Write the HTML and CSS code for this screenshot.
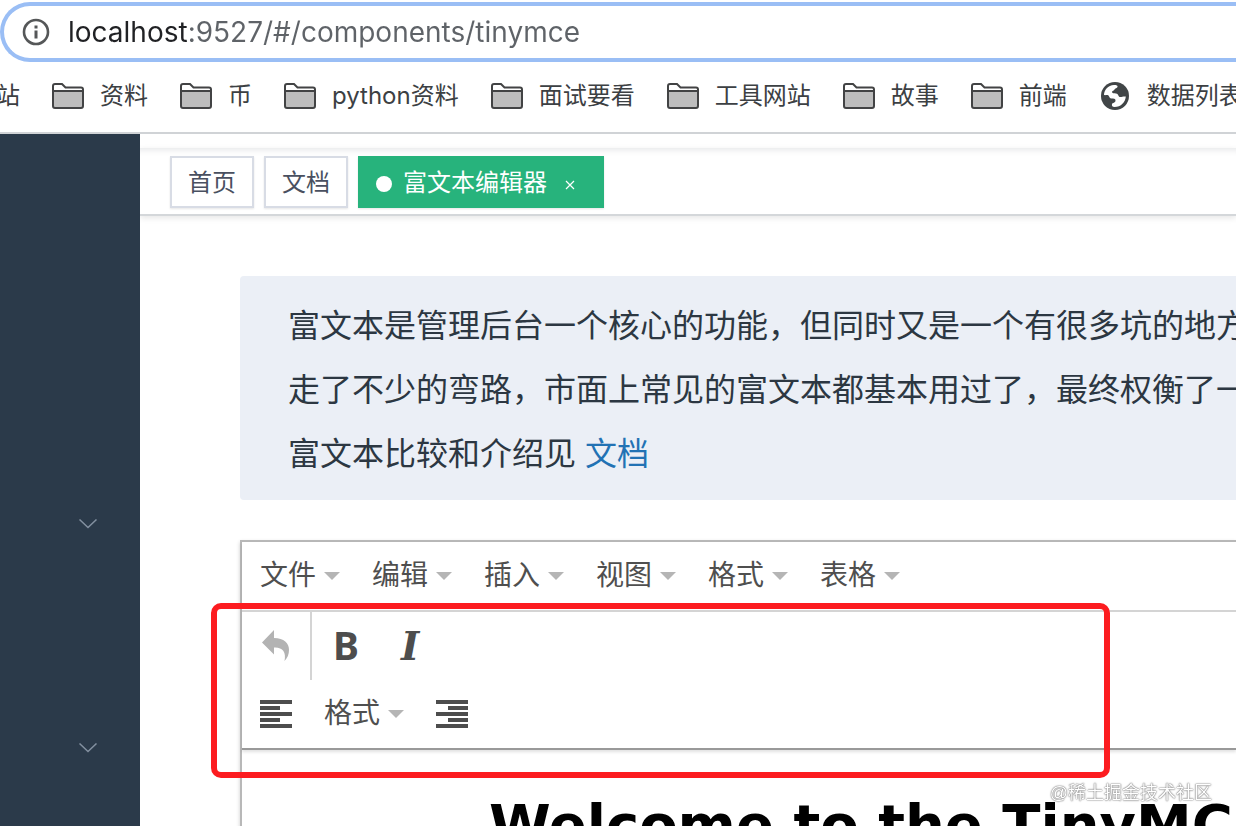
FILE: index.html
```html
<!DOCTYPE html>
<html lang="zh-CN">
<head>
  <meta charset="UTF-8" />
  <meta name="viewport" content="width=device-width, initial-scale=1.0"/>
  <title>富文本编辑器</title>
  <link rel="stylesheet" href="styles.css">
</head>
<body>
  <svg class="sprite" aria-hidden="true">
    <symbol id="folder" viewBox="0 0 32 26">
      <path d="M1 23V3Q1 1 3 1H10L13.5 4.500H29Q31 4.500 31 6.500V23Q31 25 29 25H3Q1 25 1 23Z" fill="#fff"/>
      <path d="M1 8H31V23Q31 25 29 25H3Q1 25 1 23Z" fill="#bdbdbd"/>
      <path d="M1 8H31M1 23V3Q1 1 3 1H10L13.500 4.500H29Q31 4.500 31 6.500V23Q31 25 29 25H3Q1 25 1 23Z" fill="none" stroke="#424344" stroke-width="2"/>
    </symbol>
    <symbol id="chevron" viewBox="0 0 18 10">
      <path d="M0.500 0.500L9 8.500L17.500 0.500" fill="none" stroke="#8390a0" stroke-width="1.500"/>
    </symbol>
  </svg>

  <!-- Address bar -->
  <header class="browser">
    <div class="address">
      <svg class="info" viewBox="0 0 28 28" aria-hidden="true">
        <circle cx="14" cy="14" r="12" fill="none" stroke="#555758" stroke-width="2.600"/>
        <path d="M12.500 7.500h3v3h-3zM12.500 12.500h3v8h-3z" fill="#555758"/>
      </svg>
      <input class="url" type="text" aria-label="URL" value="localhost:9527/#/components/tinymce" spellcheck="false">
    </div>
    <nav class="bookmarks">
      <a href="#">站</a>
      <a href="#"><svg class="folder"><use href="#folder"/></svg>资料</a>
      <a href="#"><svg class="folder"><use href="#folder"/></svg>币</a>
      <a href="#"><svg class="folder"><use href="#folder"/></svg>python资料</a>
      <a href="#"><svg class="folder"><use href="#folder"/></svg>面试要看</a>
      <a href="#"><svg class="folder"><use href="#folder"/></svg>工具网站</a>
      <a href="#"><svg class="folder"><use href="#folder"/></svg>故事</a>
      <a href="#"><svg class="folder"><use href="#folder"/></svg>前端</a>
      <a href="#">
        <svg class="globe" viewBox="0 0 28 28">
          <circle cx="14" cy="14" r="14" fill="#414547"/>
          <path d="M3 13C3 8 7 3.500 13 3C15.500 3 17 3.500 16.500 5C16 6.500 14 6 13.500 7.500C13.200 9 11 8.500 11 10C11 11.500 13 11 15 11.500C17.500 12 17 14 18.500 15C20.500 15.500 22 14 24.800 14.500C24.500 20 20 25 13.500 25C11.500 25 10.500 24 11 22C11.500 20.500 14.500 21 14.500 18.500C14.500 16.500 12.500 16.500 10.500 16.500C8.500 16.500 8.500 14.500 7.500 13.500C6 12.500 4.500 13.500 3 13Z" fill="#fff"/>
        </svg>数据列表
      </a>
    </nav>
  </header>

  <div class="app">
    <!-- Sidebar -->
    <aside class="sidebar">
      <button class="submenu" aria-label="展开"><svg class="chevron"><use href="#chevron"/></svg></button>
      <button class="submenu" aria-label="展开"><svg class="chevron"><use href="#chevron"/></svg></button>
    </aside>

    <main class="main">
      <div class="navbar"></div>
      <div class="tags">
        <a class="tag" href="#">首页</a>
        <a class="tag" href="#">文档</a>
        <a class="tag active" href="#">
          富文本编辑器
          <svg class="close" viewBox="0 0 10 10"><path d="M1 1L9 9M9 1L1 9" stroke="#fff" stroke-width="1.200"/></svg>
        </a>
      </div>

      <div class="content">
        <aside class="note">
          富文本是管理后台一个核心的功能，但同时又是一个有很多坑的地方<br>
          走了不少的弯路，市面上常见的富文本都基本用过了，最终权衡了一<br>
          富文本比较和介绍见 <a href="#">文档</a>
        </aside>

        <!-- Editor -->
        <section class="editor">
          <div class="panel">
            <div class="menubar">
              <button class="menu">文件</button>
              <button class="menu">编辑</button>
              <button class="menu">插入</button>
              <button class="menu">视图</button>
              <button class="menu">格式</button>
              <button class="menu">表格</button>
            </div>
            <div class="toolbar">
              <button class="tool undo" aria-label="撤销">
                <svg viewBox="0 0 32 32"><path d="M14 0V8C24 8 29 13 29 20C29 24 27.500 28 24.500 31C26.500 22 22.500 17 14 17.500V24.500L2 12.500Z" fill="#b3b3b3"/></svg>
              </button>
              <button class="tool bold">B</button>
              <button class="tool italic">I</button>
            </div>
            <div class="toolbar">
              <button class="tool" aria-label="左对齐">
                <svg viewBox="0 0 32 32"><path d="M0 2h32v4H0zM0 8h20v4H0zM0 14h32v4H0zM0 20h20v4H0zM0 26h32v4H0z" fill="#4d4d4d"/></svg>
              </button>
              <button class="menu">格式</button>
              <button class="tool" aria-label="右对齐">
                <svg viewBox="0 0 32 32"><path d="M0 2h32v4H0zM12 8h20v4H12zM0 14h32v4H0zM12 20h20v4H12zM0 26h32v4H0z" fill="#4d4d4d"/></svg>
              </button>
            </div>
          </div>
          <h1 class="welcome">Welcome to the TinyMCE</h1>
          <div class="highlight"></div>
        </section>
      </div>
    </main>
  </div>

  <div class="watermark">@稀土掘金技术社区</div>
</body>
</html>
```

FILE: styles.css
```css
* {
  box-sizing: border-box;
}

body {
  margin: 0;
  height: 100vh;
  display: flex;
  flex-direction: column;
  overflow: hidden;
  background: #fff;
  font-family: "Liberation Sans", "Noto Sans CJK SC", sans-serif;
}

a {
  text-decoration: none;
}

button {
  border: none;
  background: none;
  padding: 0;
  font-family: inherit;
  cursor: pointer;
}

.sprite {
  position: absolute;
  width: 0;
  height: 0;
}

/* Browser chrome */
.browser {
  flex: none;
  padding-top: 2px;
  border-bottom: 2px solid #d0d3d6;
}

.address {
  display: flex;
  align-items: center;
  gap: 18px;
  height: 60px;
  padding-left: 18px;
  border: 4px solid #9abef5;
  border-right: none;
  border-radius: 30px 0 0 30px;
}

.info {
  flex: none;
  width: 28px;
  height: 28px;
}

.url {
  flex: 1;
  min-width: 0;
  padding: 0;
  border: none;
  outline: none;
  font-family: Inter, sans-serif;
  font-size: 28px;
  /* host dark, path grey */
  color: transparent;
  background: linear-gradient(90deg, #202124 121px, #5f6368 121px);
  -webkit-background-clip: text;
  background-clip: text;
}

.bookmarks {
  display: flex;
  align-items: center;
  gap: 32px;
  height: 70px;
  margin-left: -4px;
  padding-bottom: 2px;
  overflow: hidden;
}

.bookmarks a {
  flex: none;
  display: flex;
  align-items: center;
  gap: 16px;
  color: #3c4043;
  font-family: Inter, "Noto Sans CJK SC", sans-serif;
  font-size: 24px;
  line-height: 36px;
}

.folder {
  width: 32px;
  height: 26px;
}

.globe {
  width: 28px;
  height: 28px;
  margin: 0 2px;
}

/* Layout */
.app {
  flex: 1;
  min-height: 0;
  display: flex;
}

.sidebar {
  flex: none;
  width: 140px;
  padding-top: 334px;
  display: flex;
  flex-direction: column;
  gap: 112px;
  background: #2b3a4a;
}

.submenu {
  display: flex;
  align-items: center;
  justify-content: flex-end;
  flex: none;
  height: 112px;
  padding-right: 43px;
}

.chevron {
  width: 18px;
  height: 10px;
}

.main {
  flex: 1;
  min-width: 0;
  overflow: hidden;
}

.navbar {
  height: 14px;
}

/* Tags */
.tags {
  display: flex;
  align-items: flex-start;
  gap: 10px;
  height: 68px;
  padding: 8px 30px 0;
  border-bottom: 2px solid #d4d7da;
  box-shadow: 0 2px 6px rgba(0, 0, 0, 0.1), inset 0 8px 6px -6px rgba(0, 21, 41, 0.1);
}

.tag {
  display: flex;
  align-items: center;
  height: 52px;
  padding: 2px 16px 0;
  border: 2px solid #d8dce5;
  background: #fff;
  color: #495060;
  font-size: 24px;
  line-height: 36px;
  box-shadow: 0 1px 2px rgba(0, 0, 0, 0.1);
}

.tag.active {
  background: #27b37c;
  border-color: #27b37c;
  color: #fff;
}

.tag.active::before {
  content: "";
  width: 16px;
  height: 16px;
  margin: 2px 11px 0 0;
  border-radius: 50%;
  background: #fff;
}

.close {
  width: 10px;
  height: 10px;
  margin: 4px 11px 0 18px;
}

/* Content */
.content {
  padding: 60px 0 0 100px;
}

.note {
  padding: 18px 0 14px 48px;
  border-radius: 4px 0 0 4px;
  background: #ebeff6;
  color: #2c3742;
  font-size: 32px;
  line-height: 64px;
  white-space: nowrap;
  overflow: hidden;
}

.note a {
  color: #2272b4;
}

/* Editor */
.editor {
  position: relative;
  margin-top: 40px;
  border: 2px solid #b8b8b8;
  border-right: none;
  border-bottom: none;
  box-shadow: 0 2px 4px rgba(0, 0, 0, 0.2);
}

.panel {
  border-bottom: 2px solid #999;
  box-shadow: 0 2px 3px rgba(0, 0, 0, 0.12);
}

.menubar {
  display: flex;
  height: 70px;
  padding-left: 2px;
  border-bottom: 2px solid #d4d4d4;
}

.menu {
  display: flex;
  align-items: center;
  gap: 8px;
  padding: 0 16px;
  color: #4f4f4f;
  font-size: 28px;
  line-height: 42px;
}

.menu::after {
  content: "";
  border: 8px solid transparent;
  border-top-color: #b5b5b5;
  border-bottom: none;
}

.toolbar {
  display: flex;
  height: 68px;
  padding-left: 2px;
}

.tool {
  display: flex;
  align-items: center;
  justify-content: center;
  width: 64px;
  color: #4d4d4d;
}

.tool svg {
  width: 32px;
  height: 32px;
}

.undo {
  width: 68px;
  padding-right: 2px;
  border-right: 2px solid #d4d4d4;
  margin-right: 2px;
}

.bold {
  padding-bottom: 3px;
  font-family: "Noto Sans", sans-serif;
  font-size: 39px;
  font-weight: 700;
}

.italic {
  font-family: "DejaVu Serif", serif;
  font-size: 39px;
  font-style: italic;
  font-weight: 700;
}

.welcome {
  margin: 40px 0 0;
  padding-left: 247px;
  color: #000;
  font-family: "DejaVu Sans", sans-serif;
  font-size: 56px;
  line-height: 70px;
  white-space: nowrap;
  overflow: hidden;
}

/* Red frame round the toolbar */
.highlight {
  position: absolute;
  top: 61px;
  left: -31px;
  width: 899px;
  height: 175px;
  border: 6px solid #fc1c20;
  border-radius: 10px;
  pointer-events: none;
}

.watermark {
  position: fixed;
  right: 24px;
  bottom: 22px;
  color: #fff;
  font-size: 18px;
  text-shadow: 0 0 1px #555, 0 0 2px #777;
}
```
